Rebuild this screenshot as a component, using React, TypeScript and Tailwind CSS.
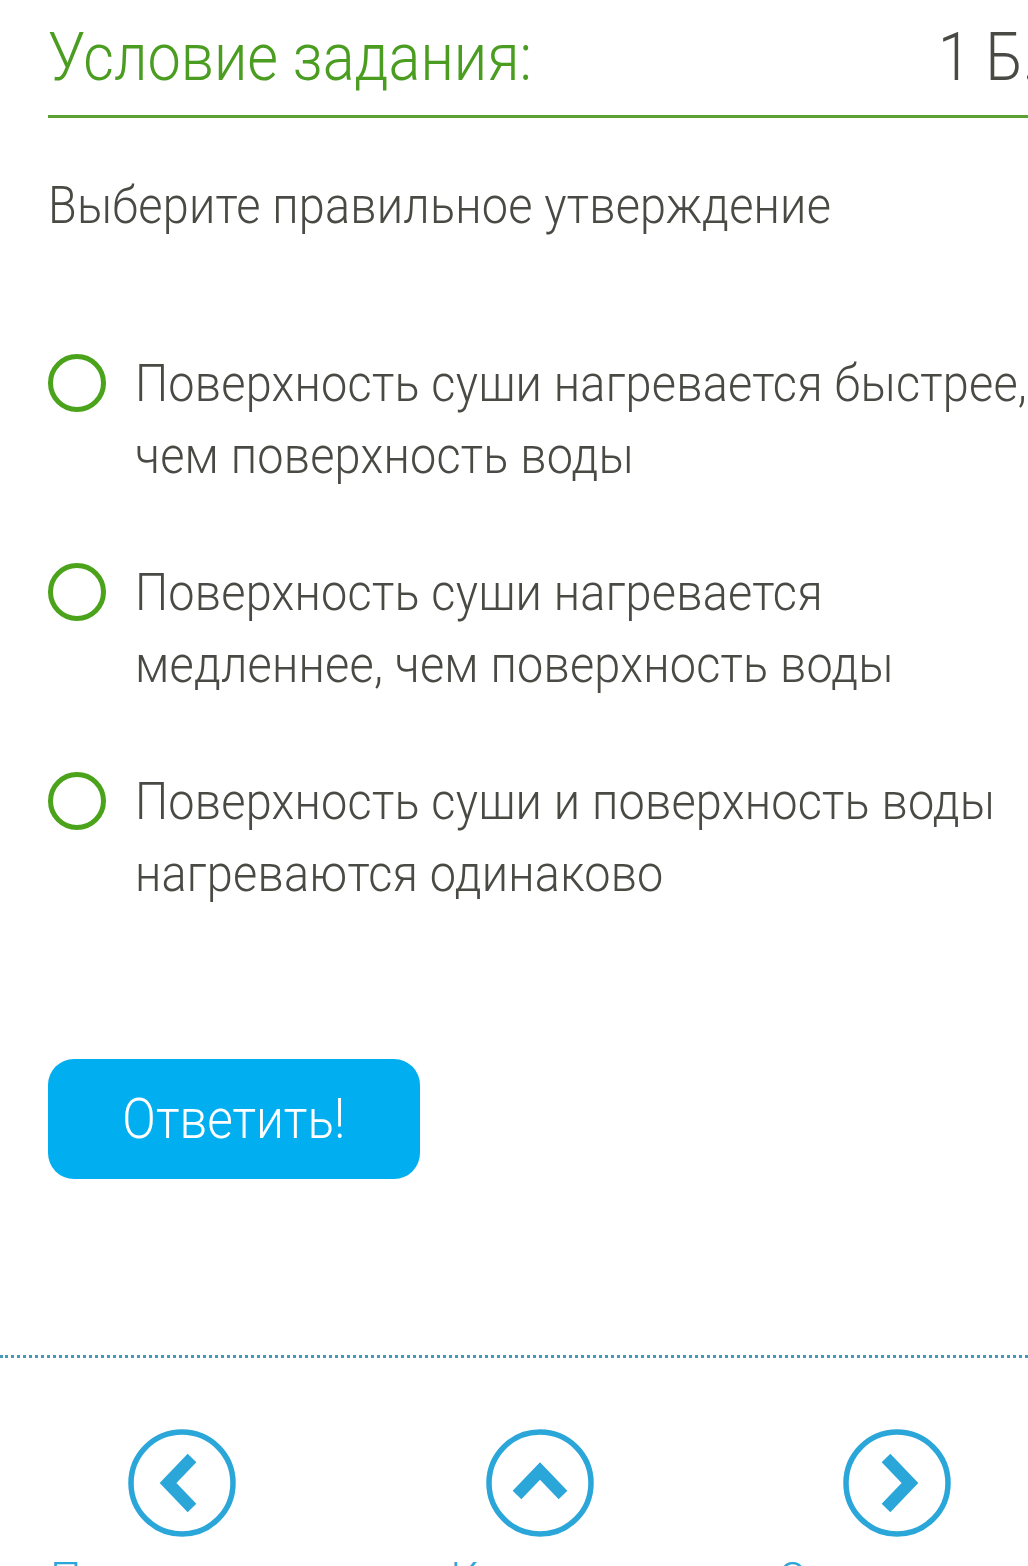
import React from "react";

const font = { fontFamily: "Roboto, 'Noto Sans', sans-serif" };

function Radio() {
  return (
    <div className="mt-[6px] h-[58px] w-[58px] shrink-0 rounded-full border-[5px] border-[#4aa31b] bg-white" />
  );
}

function Option({ lines }: { lines: string[] }) {
  return (
    <div className="flex items-start">
      <Radio />
      <div className="ml-[29px] origin-left scale-x-[0.9] whitespace-nowrap text-[52px] leading-[72px] font-light tracking-[0.005em] text-[#4a4a45]">
        {lines.map((l, i) => (
          <div key={i}>{l}</div>
        ))}
      </div>
    </div>
  );
}

function NavCircle({ dir }: { dir: "left" | "up" | "right" }) {
  const pts =
    dir === "left" ? "64,29 40,54 64,79" : dir === "right" ? "43,29 67,54 43,79" : "31,66 54,42 77,66";
  return (
    <svg width="108" height="108" viewBox="0 0 108 108">
      <circle cx="54" cy="54" r="51" fill="none" stroke="#2ba6d9" strokeWidth="5.5" />
      <polyline points={pts} fill="none" stroke="#2ba6d9" strokeWidth="12" strokeLinejoin="miter" strokeLinecap="butt" />
    </svg>
  );
}

export default function App() {
  return (
    <div className="h-[1566px] w-[1028px] overflow-hidden bg-white" style={font}>
      <div className="w-[1100px] pl-[48px]">
        <div className="flex w-[989px] items-start justify-between pt-[18px]">
          <div className="origin-left scale-x-[0.9] text-[66px] leading-[80px] font-light text-[#4b9d21]">Условие задания:</div>
          <div className="origin-right scale-x-[0.9] text-[66px] leading-[80px] font-light text-[#4a4a45]">1 Б.</div>
        </div>
        <div className="mt-[17px] h-[3px] w-[1052px] bg-[#5aa033]" />
        <div className="mt-[52px] origin-left scale-x-[0.9] whitespace-nowrap text-[52px] leading-[72px] font-light tracking-[0.005em] text-[#4a4a45]">
          Выберите правильное утверждение
        </div>
        <div className="mt-[106px] flex flex-col gap-[65px]">
          <Option lines={["Поверхность суши нагревается быстрее,", "чем поверхность воды"]} />
          <Option lines={["Поверхность суши нагревается", "медленнее, чем поверхность воды"]} />
          <Option lines={["Поверхность суши и поверхность воды", "нагреваются одинаково"]} />
        </div>
        <button className="mt-[149px] flex h-[120px] w-[372px] items-center justify-center rounded-[26px] bg-[#01aeef] text-white">
          <span className="scale-x-[0.9] text-[55px] font-light">Ответить!</span>
        </button>
      </div>
      <div className="mt-[176px] h-0 w-full border-t-[3px] border-dotted border-[#4699bb]" />
      <div className="mt-[71px] grid grid-cols-[364px_352px_362px]">
        <div className="flex flex-col items-center">
          <NavCircle dir="left" />
          <div className="mt-[9px] text-[44px] font-light text-[#2ba6d9]">Предыдущее</div>
        </div>
        <div className="flex flex-col items-center">
          <NavCircle dir="up" />
          <div className="mt-[9px] text-[44px] font-light text-[#2ba6d9]">К теории</div>
        </div>
        <div className="flex flex-col items-center">
          <NavCircle dir="right" />
          <div className="mt-[9px] text-[44px] font-light text-[#2ba6d9]">Следующее</div>
        </div>
      </div>
    </div>
  );
}
